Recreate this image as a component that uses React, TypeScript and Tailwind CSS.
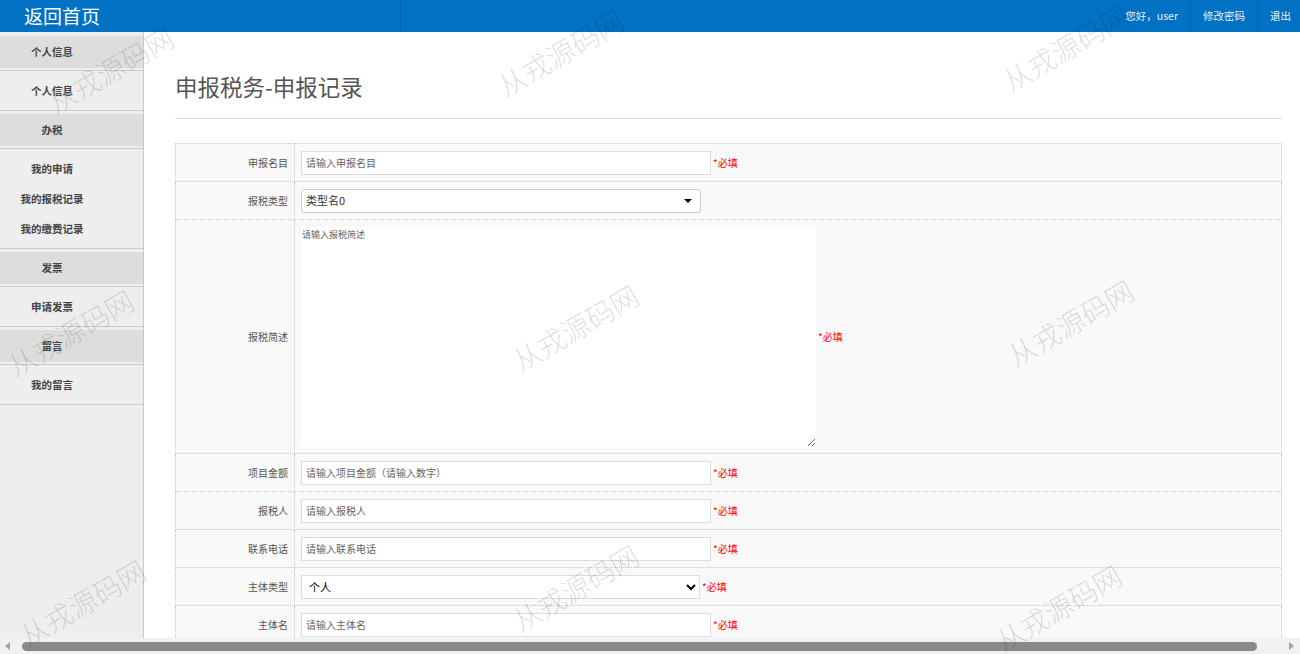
import { ChangeEvent } from "react";

const groups = [
  { title: "个人信息", items: ["个人信息"] },
  { title: "办税", items: ["我的申请", "我的报税记录", "我的缴费记录"] },
  { title: "发票", items: ["申请发票"] },
  { title: "留言", items: ["我的留言"] },
];

const marks = [
  { left: 40, top: 55 },
  { left: 490, top: 38 },
  { left: 995, top: 33 },
  { left: 0, top: 318 },
  { left: 505, top: 313 },
  { left: 1000, top: 308 },
  { left: 12, top: 588 },
  { left: 505, top: 573 },
  { left: 988, top: 593 },
];

const font = "font-['Noto_Sans_CJK_SC','Noto_Sans',sans-serif]";

function Required() {
  return <span className="text-[10px] leading-[14px] text-[#ff0000]">*必填</span>;
}

function Row({ label, tall, children }: { label: string; tall?: boolean; children: React.ReactNode }) {
  return (
    <tr>
      <td className="w-[119px] border border-dotted border-[#c8c8c8] pr-[6px] text-right align-middle text-[10px] leading-[14px] text-[#555]">
        {label}
      </td>
      <td
        className={`border border-dotted border-[#c8c8c8] p-0 pl-[6px] align-middle ${
          tall ? "h-[234px]" : "h-[38px]"
        }`}
      >
        <div className="flex items-center gap-[2px]">{children}</div>
      </td>
    </tr>
  );
}

function TextInput({ placeholder }: { placeholder: string }) {
  return (
    <input
      type="text"
      placeholder={placeholder}
      className="h-6 w-[410px] border border-[#ddd] bg-white px-[4px] text-[10px] text-[#333] outline-none placeholder:text-[#666]"
    />
  );
}

export default function App() {
  const noop = (_e: ChangeEvent<HTMLSelectElement>) => {};

  return (
    <div className={`relative flex h-[654px] w-full flex-col overflow-hidden bg-white ${font}`}>
      {/* top bar */}
      <div className="flex h-8 shrink-0 items-stretch bg-[#0071c3] text-white">
        <div className="flex w-[401px] items-center border-r border-[#0062aa] pl-6 text-[19px]">返回首页</div>
        <div className="flex-1" />
        <div className="flex items-center pr-[12px] text-[10.5px] text-[#e8f0f8]">您好，user</div>
        <div className="flex items-center border-l border-[#0062aa] px-[12px] text-[10.5px] text-[#e8f0f8]">修改密码</div>
        <div className="flex items-center border-l border-[#0062aa] pl-[12px] pr-[9px] text-[10.5px] text-[#e8f0f8]">退出</div>
      </div>

      <div className="flex min-h-0 flex-1">
        {/* sidebar */}
        <div className="w-[144px] shrink-0 border-r border-[#c8c8c8] bg-[#eeeeee] pt-[1px]">
          {groups.map((g) => (
            <div key={g.title}>
              <div className="mt-[3px] flex h-8 items-center justify-center bg-[#dddddd] pr-[39px] text-[10.5px] font-bold text-[#444]">
                {g.title}
              </div>
              <div className="mt-[2px] border-y border-[#cccccc] pt-[5px] pb-[4px]">
                {g.items.map((it) => (
                  <div
                    key={it}
                    className="flex h-[30px] items-center justify-center pr-[39px] text-[10.5px] font-bold text-[#444]"
                  >
                    {it}
                  </div>
                ))}
              </div>
            </div>
          ))}
        </div>

        {/* main */}
        <div className="min-w-0 flex-1 pl-[31px] pr-[18px]">
          <div className="border-b border-[#dddddd] pt-[42px] pb-[20px]">
            <h1 className="text-[22.5px] leading-[24px] text-[#555]">申报税务-申报记录</h1>
          </div>

          <table className="mt-[24px] w-full border-collapse bg-[#f9f9f9]">
            <tbody>
              <Row label="申报名目">
                <TextInput placeholder="请输入申报名目" />
                <Required />
              </Row>
              <Row label="报税类型">
                <div className="relative">
                  <select
                    value="0"
                    onChange={noop}
                    className="block h-6 w-[400px] appearance-none rounded-[3px] border border-[#ccc] bg-white pl-[4px] text-[11px] text-[#333] outline-none"
                  >
                    <option value="0">类型名0</option>
                  </select>
                  <span className="pointer-events-none absolute right-[9px] top-[10px] h-0 w-0 border-x-[4px] border-t-[4px] border-x-transparent border-t-black" />
                </div>
              </Row>
              <Row label="报税简述" tall>
                <textarea
                  placeholder="请输入报税简述"
                  className="block h-[220px] w-[515px] border-none bg-white px-[1px] py-[1px] text-[9px] text-[#333] outline-none placeholder:text-[#666]"
                />
                <Required />
              </Row>
              <Row label="项目金额">
                <TextInput placeholder="请输入项目金额（请输入数字）" />
                <Required />
              </Row>
              <Row label="报税人">
                <TextInput placeholder="请输入报税人" />
                <Required />
              </Row>
              <Row label="联系电话">
                <TextInput placeholder="请输入联系电话" />
                <Required />
              </Row>
              <Row label="主体类型">
                <select
                  value="个人"
                  onChange={noop}
                  className="h-6 w-[399px] border border-[#ddd] bg-white pl-[3px] text-[11px] text-black outline-none"
                >
                  <option value="个人">个人</option>
                </select>
                <Required />
              </Row>
              <Row label="主体名">
                <TextInput placeholder="请输入主体名" />
                <Required />
              </Row>
            </tbody>
          </table>
        </div>
      </div>

      {/* horizontal scrollbar */}
      <div className="flex h-4 shrink-0 items-center bg-[#f1f1f1]">
        <span className="ml-[5px] h-0 w-0 border-y-[4px] border-r-[5px] border-y-transparent border-r-[#a3a3a3]" />
        <div className="ml-[12px] h-[9px] w-[1235px] rounded-full bg-[#8a8a8a]" />
        <div className="flex-1" />
        <span className="mr-[6px] h-0 w-0 border-y-[4px] border-l-[5px] border-y-transparent border-l-[#a3a3a3]" />
      </div>

      {/* watermarks */}
      {marks.map((m, i) => (
        <div
          key={i}
          className="pointer-events-none absolute -rotate-[30deg] whitespace-nowrap text-[28px] font-light leading-none text-black/[0.14]"
          style={{ left: m.left, top: m.top }}
        >
          从戎源码网
        </div>
      ))}
    </div>
  );
}
